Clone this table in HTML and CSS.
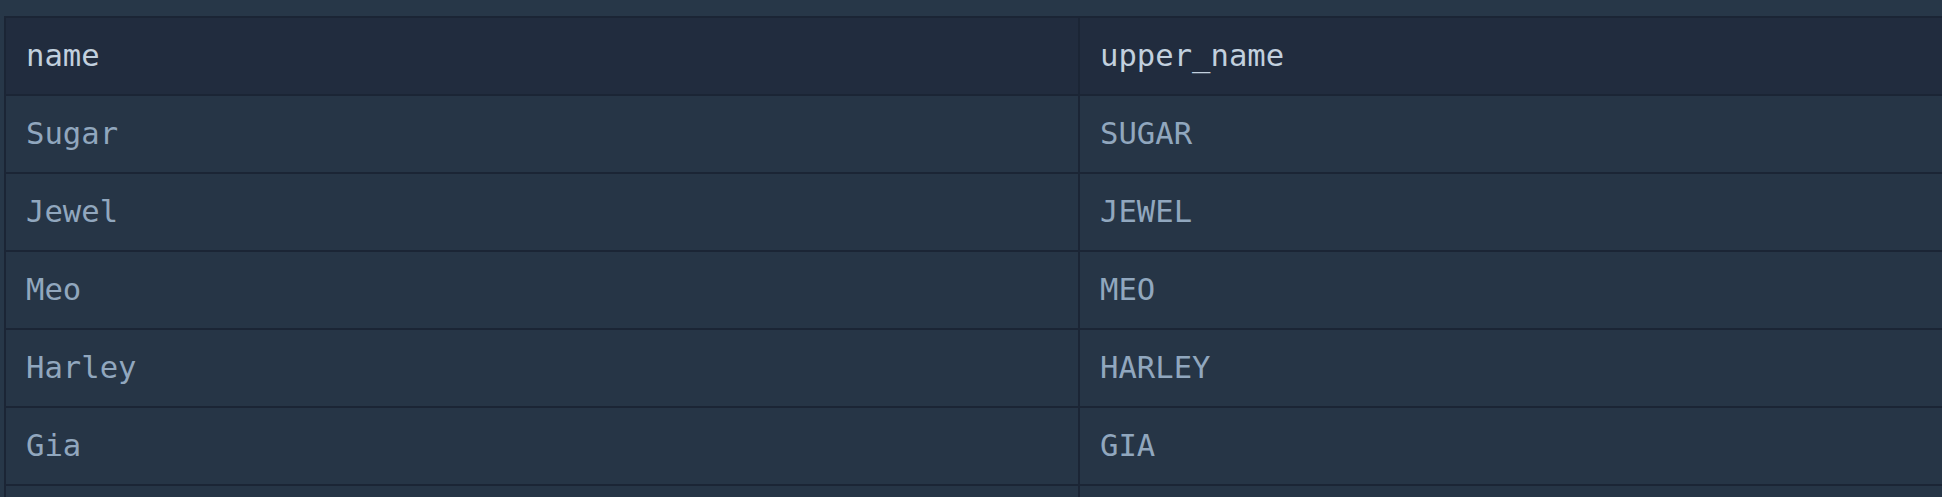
FILE: index.html
```html
<!DOCTYPE html>
<html>
<head>
<meta charset="utf-8">
<link rel="stylesheet" href="styles.css">
</head>
<body>
<div class="wrap">
<table class="grid">
<thead>
<tr><th>name</th><th>upper_name</th></tr>
</thead>
<tbody>
<tr><td>Sugar</td><td>SUGAR</td></tr>
<tr><td>Jewel</td><td>JEWEL</td></tr>
<tr><td>Meo</td><td>MEO</td></tr>
<tr><td>Harley</td><td>HARLEY</td></tr>
<tr><td>Gia</td><td>GIA</td></tr>
<tr><td></td><td></td></tr>
</tbody>
</table>
</div>
</body>
</html>
```
FILE: styles.css
```css
html, body {
  margin: 0;
  padding: 0;
  background: #273748;
  overflow: hidden;
  height: 497px;
}
.wrap {
  padding: 16px 0 0 4px;
  width: 2200px;
}
.grid {
  border-collapse: collapse;
  width: 2150px;
  table-layout: fixed;
  font-family: "DejaVu Sans Mono", monospace;
  font-size: 30.6px;
  border: 2px solid #1b2535;
}
.grid th, .grid td {
  border: 2px solid #1b2535;
  padding: 0 20px;
  line-height: 36px;
  text-align: left;
  font-weight: normal;
  box-sizing: border-box;
  height: 78px;
}
.grid th {
  background: #212c3e;
  color: #c2d0de;
}
.grid td {
  background: #263546;
  color: #91a7be;
}
```
